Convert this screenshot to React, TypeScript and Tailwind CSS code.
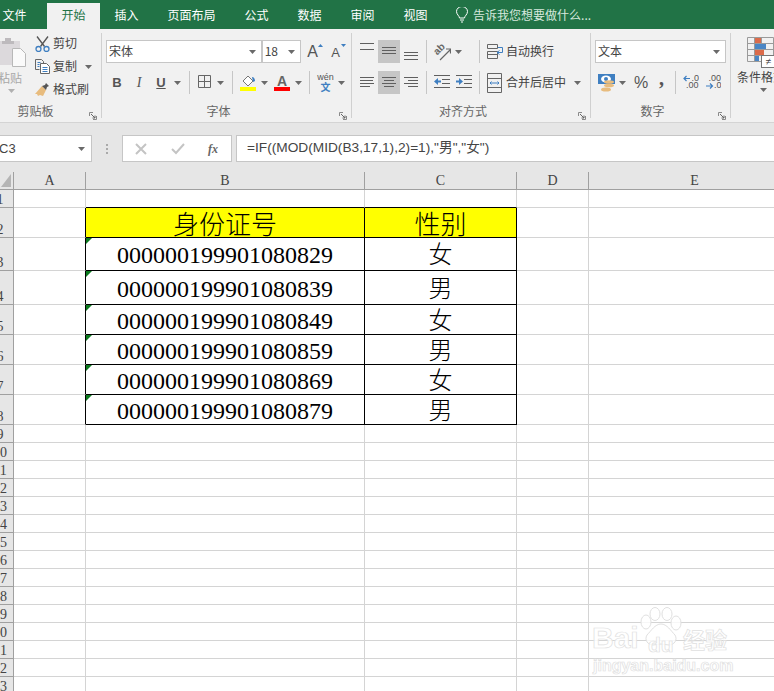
import type { ReactNode } from 'react';

const tabs = ['开始', '插入', '页面布局', '公式', '数据', '审阅', '视图'];

type SheetRow = { n: number; h: string; id?: string; sex?: string; lead?: string };

const rows: SheetRow[] = [
  { n: 1, h: 'h-[18px]' },
  { n: 2, h: 'h-[30px]', id: '身份证号', sex: '性别', lead: 'leading-[35px]' },
  { n: 3, h: 'h-[33px]', id: '000000199901080829', sex: '女', lead: 'leading-[34px]' },
  { n: 4, h: 'h-[34px]', id: '000000199901080839', sex: '男', lead: 'leading-[36px]' },
  { n: 5, h: 'h-[30px]', id: '000000199901080849', sex: '女', lead: 'leading-[32px]' },
  { n: 6, h: 'h-[30px]', id: '000000199901080859', sex: '男', lead: 'leading-[32px]' },
  { n: 7, h: 'h-[30px]', id: '000000199901080869', sex: '女', lead: 'leading-[32px]' },
  { n: 8, h: 'h-[30px]', id: '000000199901080879', sex: '男', lead: 'leading-[32px]' },
  ...Array.from({ length: 15 }, (_, i) => ({ n: i + 9, h: 'h-[18px]' })),
];

function Caret() {
  return (
    <svg width="7" height="4" viewBox="0 0 7 4" className="shrink-0">
      <path d="M0 0h7L3.5 4z" fill="#6a6a6a" />
    </svg>
  );
}

function Launcher() {
  return (
    <svg width="8" height="8" viewBox="0 0 8 8">
      <path d="M.5 4V.5H4M7.5 4v3.5H4" fill="none" stroke="#8a8a8a" />
      <path d="M2 2l4 4M6 3.5V6H3.5" fill="none" stroke="#666" />
    </svg>
  );
}

function Sep() {
  return <div className="w-px h-[23px] bg-[#c6c6c6] shrink-0" />;
}

// horizontal lines drawn across a whole 22x23 alignment cell
function Lines({ lines }: { lines: [number, number, number][] }) {
  return (
    <svg width="22" height="23" viewBox="0 0 22 23" className="shrink-0">
      {lines.map(([a, b, y]) => (
        <path key={y} d={`M${a} ${y + 0.5}H${b}`} stroke="#5f5f5f" />
      ))}
    </svg>
  );
}

function Group({ width, label, pad, children }: { width: string; label: string; pad: string; children: ReactNode }) {
  return (
    <div className={`${width} shrink-0 flex flex-col`}>
      <div className="h-[75px]">{children}</div>
      <div className={`relative h-[18px] flex items-center justify-center pb-[4px] text-[12px] text-[#666] ${pad}`}>
        {label}
        <span className="absolute right-[4px] bottom-[2px] flex">
          <Launcher />
        </span>
      </div>
    </div>
  );
}

function GroupSep() {
  return <div className="w-px h-[85px] mt-[4px] bg-[#d0d0d0] shrink-0" />;
}

function Select({ width, text }: { width: string; text: string }) {
  return (
    <div className={`${width} h-[23px] bg-white border border-[#c6c6c6] flex items-center justify-between pl-[2px] pr-[5px] text-[12px] text-[#444]`}>
      <span className="pb-[2px]">{text}</span>
      <Caret />
    </div>
  );
}

function AlignCell({ on, children }: { on?: boolean; children: ReactNode }) {
  return <div className={`w-[22px] h-[23px] flex items-center justify-center ${on ? 'bg-[#c6c6c6]' : ''}`}>{children}</div>;
}

function Clipboard() {
  return (
    <Group width="w-[101px]" label="剪贴板" pad="pr-[30px]">
      <div className="flex">
        <div className="w-[35px] flex flex-col">
          <svg width="26" height="31" viewBox="0 0 26 31" className="mt-[8px]">
            <path d="M0 4h20v7h-8v17H0z" fill="#dcd9dc" />
            <path d="M5 4V1h6v3h3v3H2V4z" fill="#bdbabd" />
            <path d="M12.5 11.5h8l5 5v13h-13z" fill="#fafafa" stroke="#b8b8b8" />
          </svg>
          <span className="-ml-[2px] mt-[1px] text-[12px] leading-[17px] text-[#a8a8a8]">粘贴</span>
          <span className="ml-[8px] mt-[3px] flex">
            <svg width="7" height="4" viewBox="0 0 7 4">
              <path d="M0 0h7L3.5 4z" fill="#b0b0b0" />
            </svg>
          </span>
        </div>
        <div className="flex flex-col gap-[6px] pt-[6px] text-[12px] text-[#444]">
          <div className="flex items-center gap-[3px] h-[17px]">
            <svg width="15" height="16" viewBox="0 0 15 16">
              <path d="M2 .5l7.5 10M13 .5L5.5 10.5" stroke="#555" strokeWidth="1.3" fill="none" />
              <circle cx="3.5" cy="13" r="2.5" fill="none" stroke="#3f7fc1" strokeWidth="1.3" />
              <circle cx="11.5" cy="13" r="2.5" fill="none" stroke="#3f7fc1" strokeWidth="1.3" />
            </svg>
            <span className="pb-[2px]">剪切</span>
          </div>
          <div className="flex items-center gap-[3px] h-[17px]">
            <svg width="15" height="15" viewBox="0 0 15 15">
              <path d="M.5.5h6l2 2v2M.5.5v10h4" fill="none" stroke="#666" />
              <path d="M5.5 4.5h6l3 3v7h-9z" fill="#fff" stroke="#666" />
              <path d="M7.5 8.5h5M7.5 10.5h5M7.5 12.5h5M2.5 3.5h3M2.5 5.5h2M2.5 7.5h2" stroke="#3f7fc1" />
            </svg>
            <span className="pb-[2px]">复制</span>
            <span className="ml-[5px] flex">
              <Caret />
            </span>
          </div>
          <div className="flex items-center gap-[3px] h-[17px]">
            <svg width="15" height="15" viewBox="0 0 15 15">
              <path d="M7 4l4 4-3 6-3-1-2 1-1-2-2 0z" fill="#e8bc7e" />
              <path d="M7 4l3-1 1-2 3 3-2 1-1 3z" fill="#555" />
            </svg>
            <span className="pb-[2px]">格式刷</span>
          </div>
        </div>
      </div>
    </Group>
  );
}

function Font() {
  return (
    <Group width="w-[249px]" label="字体" pad="pr-[16px]">
      <div className="flex items-center pl-[4px] pt-[11px]">
        <Select width="w-[157px]" text="宋体" />
        <Select width="w-[40px]" text="18" />
        <div className="ml-[6px] w-[20px] h-[23px] flex items-start text-[16px] leading-[23px] text-[#555] font-['Liberation_Sans']">
          A
          <svg width="5" height="3" viewBox="0 0 5 3" className="mt-[4px]">
            <path d="M0 3h5L2.5 0z" fill="#3f7fc1" />
          </svg>
        </div>
        <div className="ml-[4px] w-[20px] h-[23px] flex items-start text-[13px] leading-[25px] text-[#555] font-['Liberation_Sans']">
          A
          <svg width="5" height="3" viewBox="0 0 5 3" className="mt-[4px] ml-[1px]">
            <path d="M0 0h5L2.5 3z" fill="#3f7fc1" />
          </svg>
        </div>
      </div>
      <div className="flex items-center h-[23px] mt-[8px] pl-[4px] text-[#555]">
        <span className="w-[22px] text-center text-[13px] font-bold font-['Liberation_Sans']">B</span>
        <span className="w-[22px] text-center text-[14px] italic font-['Liberation_Serif']">I</span>
        <span className="w-[22px] text-center text-[13px] font-bold underline font-['Liberation_Sans']">U</span>
        <span className="ml-[2px] flex">
          <Caret />
        </span>
        <span className="ml-[8px] flex">
          <Sep />
        </span>
        <svg width="15" height="15" viewBox="0 0 15 15" className="ml-[8px]">
          <path d="M.5.5h12v12H.5zM6.5.5v12M.5 6.5h12" fill="none" stroke="#666" />
        </svg>
        <span className="ml-[4px] flex">
          <Caret />
        </span>
        <span className="ml-[8px] flex">
          <Sep />
        </span>
        <svg width="16" height="16" viewBox="0 0 16 16" className="ml-[7px]">
          <path d="M3 6l5-5 5 5-5 5z" fill="#fff" stroke="#777" />
          <path d="M12 2c2 0 3 2 3 4l-2 1z" fill="#3f7fc1" />
          <rect y="12" width="16" height="4" fill="#ffff00" />
        </svg>
        <span className="ml-[5px] flex">
          <Caret />
        </span>
        <svg width="16" height="16" viewBox="0 0 16 16" className="ml-[6px]">
          <text x="8" y="11" textAnchor="middle" fontSize="14" fontWeight="bold" fill="#666" fontFamily="Liberation Sans">A</text>
          <rect y="12" width="16" height="4" fill="#ff0000" />
        </svg>
        <span className="ml-[5px] flex">
          <Caret />
        </span>
        <span className="ml-[7px] flex">
          <Sep />
        </span>
        <div className="ml-[8px] w-[15px] flex flex-col items-center">
          <span className="text-[9px] leading-[9px] font-['Liberation_Sans'] text-[#555]">wén</span>
          <span className="text-[10px] leading-[10px] font-bold text-[#3f7fc1]">文</span>
        </div>
        <span className="ml-[5px] flex">
          <Caret />
        </span>
      </div>
    </Group>
  );
}

function Alignment() {
  return (
    <Group width="w-[238px]" label="对齐方式" pad="pr-[16px]">
      <div className="flex items-center pl-[4px] pt-[11px] text-[12px] text-[#444]">
        <AlignCell>
          <Lines lines={[[4, 18, 3], [4, 18, 9]]} />
        </AlignCell>
        <AlignCell on>
          <Lines lines={[[4, 18, 7], [4, 18, 10], [4, 18, 13]]} />
        </AlignCell>
        <AlignCell>
          <Lines lines={[[4, 18, 12], [4, 18, 15], [4, 18, 19]]} />
        </AlignCell>
        <span className="ml-[4px] flex">
          <Sep />
        </span>
        <svg width="17" height="18" viewBox="0 0 17 18" className="ml-[7px]">
          <text x="1" y="11" transform="rotate(-45 4 9)" fontSize="10" fontWeight="bold" fill="#666" fontFamily="Liberation Sans">ab</text>
          <path d="M6 17L16 7M12 6h4.500v4.500" fill="none" stroke="#666" strokeWidth="1.200" />
        </svg>
        <span className="ml-[4px] flex">
          <Caret />
        </span>
        <span className="ml-[17px] flex">
          <Sep />
        </span>
        <svg width="16" height="15" viewBox="0 0 16 15" className="ml-[7px]">
          <path d="M.5.5h10v4H.5zM.5 7.500h10v7H.5zM.5 10.500h10" fill="none" stroke="#666" />
          <path d="M11 3.500h4.500V8.500H10M12.500 6.500l-2.500 2 2.500 2" fill="none" stroke="#3f7fc1" />
        </svg>
        <span className="ml-[3px] pb-[2px]">自动换行</span>
      </div>
      <div className="flex items-center h-[23px] mt-[8px] pl-[4px] text-[12px] text-[#444]">
        <AlignCell>
          <Lines lines={[[4, 18, 6], [4, 17, 9], [4, 18, 12], [4, 14, 15]]} />
        </AlignCell>
        <AlignCell on>
          <Lines lines={[[4, 18, 6], [6, 16, 9], [4, 18, 12], [6, 16, 15]]} />
        </AlignCell>
        <AlignCell>
          <Lines lines={[[4, 18, 6], [8, 18, 9], [4, 18, 12], [8, 18, 15]]} />
        </AlignCell>
        <span className="ml-[4px] flex">
          <Sep />
        </span>
        <svg width="16" height="15" viewBox="0 0 16 15" className="ml-[7px]">
          <path d="M0 .5h16M8 4.500h8M8 8.500h8M0 12.500h16" stroke="#5f5f5f" />
          <path d="M0 6.500l4-3.500v2.500h3v2H4v2.500z" fill="#3f7fc1" />
        </svg>
        <svg width="16" height="15" viewBox="0 0 16 15" className="ml-[6px]">
          <path d="M0 .5h16M8 4.500h8M8 8.500h8M0 12.500h16" stroke="#5f5f5f" />
          <path d="M7 6.500L3 3v2.500H0v2h3V10z" fill="#3f7fc1" />
        </svg>
        <span className="ml-[7px] flex">
          <Sep />
        </span>
        <svg width="16" height="20" viewBox="0 0 16 20" className="ml-[7px]">
          <path d="M.5.5h14v19H.5zM.5 5.500h14M.5 14.500h14" fill="none" stroke="#666" />
          <path d="M3 10h9M4.500 8.500L3 10l1.500 1.500M10.500 8.500L12 10l-1.500 1.500" fill="none" stroke="#3f7fc1" />
        </svg>
        <span className="ml-[3px] pb-[2px]">合并后居中</span>
        <span className="ml-[8px] flex">
          <Caret />
        </span>
      </div>
    </Group>
  );
}

function NumberGroup() {
  return (
    <Group width="w-[139px]" label="数字" pad="pr-[16px]">
      <div className="flex pl-[4px] pt-[11px]">
        <Select width="w-[131px]" text="文本" />
      </div>
      <div className="flex items-center h-[23px] mt-[8px] pl-[7px] text-[#555]">
        <svg width="17" height="18" viewBox="0 0 17 18">
          <rect width="17" height="10" fill="#3f7fc1" />
          <ellipse cx="8" cy="5" rx="5" ry="3.500" fill="#fff" />
          <circle cx="8" cy="5" r="2" fill="#3f7fc1" />
          <ellipse cx="11" cy="8" rx="5" ry="1.800" fill="#e8bc7e" />
          <ellipse cx="11" cy="11.500" rx="5" ry="1.800" fill="#e8bc7e" />
          <ellipse cx="8" cy="15.500" rx="5" ry="2" fill="#e8bc7e" />
        </svg>
        <span className="ml-[4px] flex">
          <Caret />
        </span>
        <span className="ml-[8px] w-[14px] text-[16px] leading-[23px] font-['Liberation_Sans']">%</span>
        <span className="ml-[11px] w-[6px] mb-[9px] text-[20px] leading-[14px] font-bold font-['Liberation_Serif']">,</span>
        <span className="ml-[10px] flex">
          <Sep />
        </span>
        <svg width="16" height="15" viewBox="0 0 16 15" className="ml-[7px]">
          <path d="M7 3.500H1M3.500 1l-2.500 2.500 2.500 2.500" fill="none" stroke="#3f7fc1" strokeWidth="1.200" />
          <text x="8.500" y="6" fontSize="9" fill="#555" fontFamily="Liberation Sans">.0</text>
          <text x="3" y="13" fontSize="9" fill="#555" fontFamily="Liberation Sans">.00</text>
        </svg>
        <svg width="15" height="15" viewBox="0 0 15 15" className="ml-[7px]">
          <text x="2.500" y="6" fontSize="9" fill="#555" fontFamily="Liberation Sans">.00</text>
          <path d="M0 11h6.500M4 8.500l2.500 2.500-2.500 2.500" fill="none" stroke="#3f7fc1" strokeWidth="1.200" />
          <text x="8" y="13" fontSize="9" fill="#555" fontFamily="Liberation Sans">.0</text>
        </svg>
      </div>
    </Group>
  );
}

function Styles() {
  return (
    <div className="flex-1 flex flex-col pl-[6px] min-w-0">
      <svg width="27" height="31" viewBox="0 0 27 31" className="ml-[10px] mt-[8px] shrink-0">
        <path d="M.5.5h26v24H.5zM.5 6.500h26M.5 12.500h26M.5 18.500h26M7.500.5v24M14.500.5v24" fill="none" stroke="#9a9a9a" />
        <rect x="8" y="1" width="6" height="5" fill="#dc6b4a" />
        <rect x="8" y="7" width="11" height="5" fill="#4a86c5" />
        <rect x="8" y="13" width="9" height="5" fill="#dc6b4a" />
        <rect x="8" y="19" width="4" height="5" fill="#4a86c5" />
        <rect x="14.500" y="18.500" width="14" height="12" fill="#fff" stroke="#777" />
        <text x="21.500" y="28" textAnchor="middle" fontSize="10" fill="#444" fontFamily="Liberation Sans">≠</text>
      </svg>
      <span className="text-[12px] leading-[17px] text-[#444] whitespace-nowrap">条件格式</span>
      <span className="ml-[23px] mt-[3px] flex">
        <Caret />
      </span>
    </div>
  );
}

function FormulaBar() {
  return (
    <div className="h-[49px] bg-[#e6e6e6] flex items-start pt-[12px]">
      <div className="w-[92px] h-[27px] bg-white border border-[#c6c6c6] border-l-0 flex items-center justify-between pr-[6px] text-[13px] text-[#444] font-['Liberation_Sans']">
        <span className="-ml-[1px]">C3</span>
        <Caret />
      </div>
      <div className="w-[30px] h-[27px] flex flex-col items-center justify-center gap-[2px]">
        <span className="w-[2px] h-[2px] bg-[#aaa]" />
        <span className="w-[2px] h-[2px] bg-[#aaa]" />
        <span className="w-[2px] h-[2px] bg-[#aaa]" />
      </div>
      <div className="w-[110px] h-[27px] bg-white border border-[#c6c6c6] flex items-center">
        <svg width="12" height="12" viewBox="0 0 12 12" className="ml-[12px]">
          <path d="M1 1l10 10M11 1L1 11" stroke="#c4c4c4" strokeWidth="2" />
        </svg>
        <svg width="14" height="12" viewBox="0 0 14 12" className="ml-[24px]">
          <path d="M1 6l4 4 8-9" fill="none" stroke="#c4c4c4" strokeWidth="2" />
        </svg>
        <span className="ml-[23px] text-[12px] italic font-bold font-['Liberation_Serif'] text-[#666]">fx</span>
      </div>
      <div className="flex-1 ml-[4px] h-[27px] bg-white border border-[#c6c6c6] border-r-0 flex items-center pl-[10px] text-[13.7px] text-[#444] font-['Liberation_Sans','Noto_Sans_CJK_SC',sans-serif]">
        =IF((MOD(MID(B3,17,1),2)=1),"男","女")
      </div>
    </div>
  );
}

function ColHead({ width, label }: { width: string; label: string }) {
  return <div className={`${width} shrink-0 h-[18px] bg-[#e6e6e6] border-r border-b border-[#a0a0a0] flex items-center justify-center text-[14px] leading-[16px] text-[#444]`}>{label}</div>;
}

function Sheet() {
  return (
    <div className="font-['Liberation_Serif','Noto_Sans_CJK_SC',serif]">
      <div className="flex">
        <div className="w-[14px] shrink-0 h-[18px] bg-[#e6e6e6] border-r border-b border-[#a0a0a0] flex items-end">
          <svg width="10" height="13" viewBox="0 0 10 13" className="ml-[1px] mb-[2px]">
            <path d="M10 0v13H0z" fill="#b5b5b5" />
          </svg>
        </div>
        <ColHead width="w-[72px]" label="A" />
        <ColHead width="w-[279px]" label="B" />
        <ColHead width="w-[152px]" label="C" />
        <ColHead width="w-[72px]" label="D" />
        <ColHead width="w-[212px]" label="E" />
      </div>
      {rows.map((r) => {
        const inTable = r.n >= 2 && r.n <= 8;
        const isHead = r.n === 2;
        const line = inTable || r.n === 1 ? 'border-r-[#d4d4d4]' : 'border-[#d4d4d4]';
        return (
          <div key={r.n} className={`flex ${r.h}`}>
            <div className="w-[14px] shrink-0 bg-[#e6e6e6] border-r border-b border-[#a0a0a0] overflow-hidden flex items-end">
              <span className="w-[28px] -ml-[14px] shrink-0 text-center text-[14px] leading-[15px] text-[#444]">{r.n}</span>
            </div>
            <div className={`w-[72px] shrink-0 border-b border-b-[#d4d4d4] border-r ${inTable ? 'border-r-[#000]' : 'border-r-[#d4d4d4]'}`} />
            <div
              className={`relative w-[279px] shrink-0 border-r border-b ${inTable ? 'border-[#000]' : line} ${r.n === 1 ? 'border-b-[#000]' : ''} ${isHead ? 'bg-[#ffff00] text-[26px] font-light' : 'text-[24px]'} ${r.lead ?? ''} flex items-start justify-center text-[#000]`}
            >
              {r.n > 2 && inTable && (
                <svg width="6" height="6" viewBox="0 0 6 6" className="absolute left-0 top-0">
                  <path d="M0 0h6L0 6z" fill="#0b7a1e" />
                </svg>
              )}
              {r.id}
            </div>
            <div
              className={`w-[152px] shrink-0 border-r border-b ${inTable ? 'border-[#000]' : line} ${r.n === 1 ? 'border-b-[#000]' : ''} ${isHead ? 'bg-[#ffff00] text-[26px]' : 'text-[24px]'} ${r.lead ?? ''} font-light flex items-start justify-center text-[#000]`}
            >
              {r.sex}
            </div>
            <div className="w-[72px] shrink-0 border-r border-b border-[#d4d4d4]" />
            <div className="flex-1 border-b border-[#d4d4d4]" />
          </div>
        );
      })}
    </div>
  );
}

function Watermark() {
  const outline = "text-white/85 [-webkit-text-stroke:0.7px_#e0e0e0] font-['Liberation_Sans','Noto_Sans_CJK_SC',sans-serif] font-bold";
  return (
    <div className="absolute left-[592px] top-[607px] w-[142px] h-[68px] pointer-events-none">
      <svg width="44" height="40" viewBox="0 0 44 40" className="absolute left-[47px] top-0">
        <g fill="#fff" fillOpacity=".8" stroke="#e0e0e0">
          <ellipse cx="7" cy="15" rx="5" ry="7" />
          <ellipse cx="16" cy="7" rx="5" ry="6.500" />
          <ellipse cx="28" cy="7" rx="5" ry="6.500" />
          <ellipse cx="37" cy="16" rx="5" ry="7" />
          <path d="M22 17c6 0 10 7 14 11 3 5-1 10-6 10-3 0-5-1-8-1s-5 1-8 1c-5 0-9-5-6-10 4-4 8-11 14-11z" />
        </g>
      </svg>
      <span className={`absolute left-0 top-[14px] text-[30px] leading-[34px] ${outline}`}>Bai</span>
      <span className={`absolute left-[56px] top-[26px] text-[21px] leading-[24px] ${outline}`}>du</span>
      <span className={`absolute left-[91px] top-[21px] text-[22px] leading-[26px] ${outline}`}>经验</span>
      <span className={`absolute left-[1px] top-[50px] text-[16px] leading-[18px] whitespace-nowrap ${outline}`}>jingyan.baidu.com</span>
    </div>
  );
}

export default function App() {
  return (
    <div className="relative w-[774px] h-[691px] overflow-hidden bg-white font-['Noto_Sans_CJK_SC','Noto_Sans',sans-serif]">
      <div className="h-[29px] bg-[#217346] flex items-end text-[12px] text-white">
        <div className="w-[53px] -ml-[12px] mr-[6px] h-[26px] flex items-center justify-center pb-[2px]">文件</div>
        {tabs.map((t, i) => (
          <div key={t} className={`px-[14.5px] h-[26px] flex items-center pb-[2px] ${i === 0 ? 'bg-[#f1f1f1] text-[#217346]' : ''}`}>
            {t}
          </div>
        ))}
        <div className="ml-[14px] h-[26px] flex items-center gap-[5px] pb-[2px] text-[#d6e8dd]">
          <svg width="12" height="16" viewBox="0 0 12 16">
            <path d="M3.500 11c0-2-3-3.500-3-6.500a5.500 5 0 0 1 11 0c0 3-3 4.500-3 6.500zM4 13h4M5 15h2" fill="none" stroke="#fff" />
          </svg>
          告诉我您想要做什么...
        </div>
      </div>
      <div className="h-[94px] bg-[#f1f1f1] border-b border-[#d4d4d4] flex">
        <Clipboard />
        <GroupSep />
        <Font />
        <GroupSep />
        <Alignment />
        <GroupSep />
        <NumberGroup />
        <GroupSep />
        <Styles />
      </div>
      <FormulaBar />
      <Sheet />
      <Watermark />
    </div>
  );
}
